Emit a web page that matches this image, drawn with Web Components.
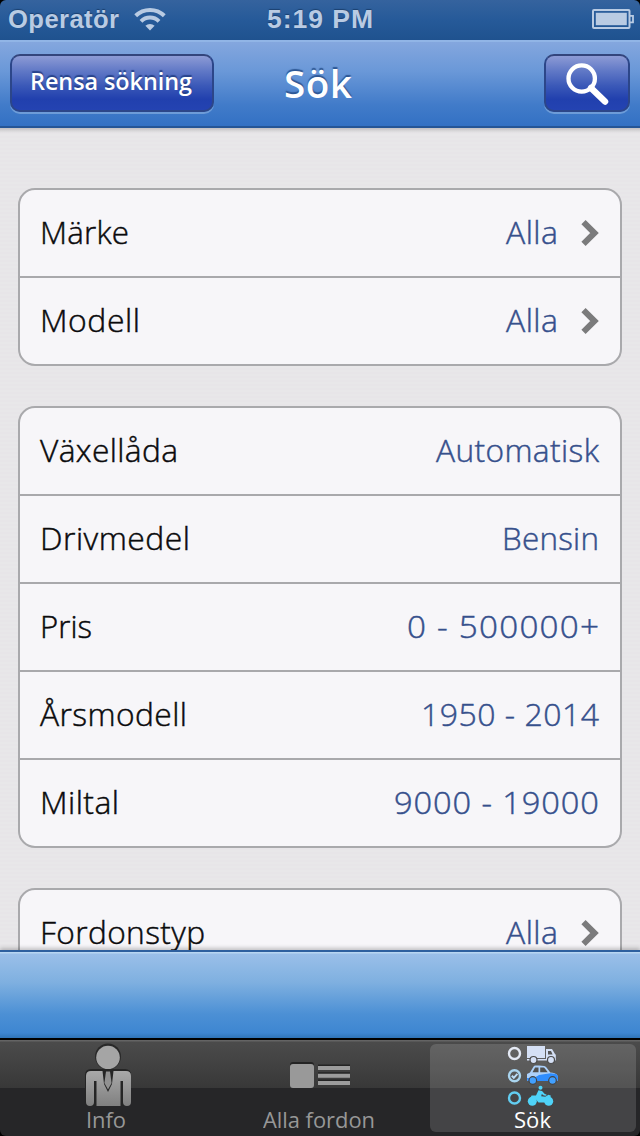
<!DOCTYPE html>
<html lang="sv">
<head>
<meta charset="utf-8">
<title>Sök</title>
<style>
html, body {
    margin: 0;
    height: 1136px;
    overflow: hidden;
    background: #000;
    font-family: "Open Sans", "Noto Sans", sans-serif;
}
</style>
</head>
<body>
<search-screen></search-screen>

<script>
function define(name, html, setup) {
    const template = document.createElement("template");
    template.innerHTML = html;

    window.customElements.define(name, class extends HTMLElement {
        connectedCallback() {
            if (this.shadowRoot) return;
            this.attachShadow({ mode: "open" });
            this.shadowRoot.append(template.content.cloneNode(true));
            if (setup) setup(this, this.shadowRoot);
        }
    });
}

function makeFitText(text, width) {
    const fit = document.createElement("fit-text");
    fit.setAttribute("text", text);
    fit.setAttribute("width", width);
    return fit;
}

// fills the given width: half by widening the glyphs, half by letter-spacing
define("fit-text", `
<style>
:host { display: block; white-space: nowrap; flex: none; }
span { display: inline-block; transform-origin: 0 50%; }
</style>
<span></span>
`, function(host, root) {
    const span = root.querySelector("span");
    const text = host.getAttribute("text");
    const width = Number(host.getAttribute("width"));
    span.textContent = text;
    const natural = span.getBoundingClientRect().width;
    const scale = (natural + width) / 2 / natural;
    span.style.letterSpacing = (width / scale - natural) / (text.length - 1) + "px";
    span.style.transform = "scaleX(" + scale + ")";
    host.style.width = width + "px";
});

define("status-bar", `
<style>
:host {
    display: grid;
    grid-template-columns: 1fr auto 1fr;
    align-items: center;
    box-sizing: border-box;
    height: 40px;
    padding: 0 6px 2px 8px;
    border-radius: 6px 6px 0 0;
    background: linear-gradient(#35639e, #265a99 50%, #1f528f);
    color: #b9cbe3;
    font: bold 25px/38px "Liberation Sans", sans-serif;
    text-shadow: 0 -1px 1px #1b406f;
}
div { display: flex; align-items: center; gap: 15px; }
svg { display: block; }
.time { margin-left: -2px; }
.battery { justify-self: end; }
</style>
<div>
    <fit-text text="Operatör" width="111"></fit-text>
    <svg width="32" height="24" viewBox="0 0 32 24" fill="none" stroke="#b9cbe3" stroke-width="4">
        <path d="M1.7 8.8a20.4 20.4 0 0 1 28.6 0"/>
        <path d="M7 14.3a12.8 12.8 0 0 1 18 0"/>
        <path d="M16 23.5l-4.6-4.7a6.6 6.6 0 0 1 9.2 0z" fill="#b9cbe3" stroke="none"/>
    </svg>
</div>
<fit-text class="time" text="5:19 PM" width="106"></fit-text>
<svg class="battery" width="42" height="20" viewBox="0 0 42 20">
    <rect x="1" y="1" width="36.5" height="18" rx="1" fill="none" stroke="#b9cbe3" stroke-width="2"/>
    <rect x="3.8" y="3.8" width="31" height="12.4" fill="#b9cbe3"/>
    <path d="M38 6.8h3v6.6h-3" fill="none" stroke="#b9cbe3" stroke-width="1.8"/>
</svg>
`);

define("nav-button", `
<style>
:host {
    display: flex;
    align-items: center;
    justify-content: center;
    box-sizing: border-box;
    height: 58px;
    border: 2px solid #2c4689;
    border-top-color: #33457c;
    border-radius: 10px;
    background: linear-gradient(#8d9bd5, #6078c6 28%, #3b59b8 55%, #2140ae 80%, #2443b2);
    box-shadow: 0 2px 0 #6d9cd8;
    color: #fff;
    font-size: 23.5px;
    font-weight: 600;
    line-height: 32px;
    text-shadow: 0 -2px 1px #27438b;
}
</style>
<slot></slot>
`);

define("nav-bar", `
<style>
:host {
    display: grid;
    grid-template-columns: 204px 1fr 86px;
    align-items: start;
    box-sizing: border-box;
    height: 88px;
    padding: 12px 10px 0;
    border-top: 2px solid #91b5e6;
    border-bottom: 2px solid #255596;
    background: linear-gradient(#84a7de, #6a98d8 35%, #417bc9 75%, #3371c4);
}
.title {
    padding-left: 70px;
    padding-top: 3px;
    color: #fff;
    font-size: 38px;
    font-weight: 600;
    line-height: 52px;
    text-shadow: 0 -2px 1px #2d5795;
}
nav-button.clear { padding: 0 2px 4px 0; }
svg { display: block; }
</style>
<nav-button class="clear"><fit-text text="Rensa sökning" width="162"></fit-text></nav-button>
<div class="title"><fit-text text="Sök" width="68"></fit-text></div>
<nav-button>
    <svg width="44" height="44" viewBox="0 0 44 44" fill="none" stroke="#fff">
        <circle cx="16.7" cy="17.5" r="13.2" stroke-width="4.3"/>
        <path d="M26 27l14 13.500" stroke-width="6.500" stroke-linecap="round"/>
    </svg>
</nav-button>
`);

define("form-group", `
<style>
:host {
    display: block;
    border: 2px solid #a9a9ac;
    border-radius: 17px;
    background: #f7f6f9;
}
::slotted(form-row:not(:first-child)) { border-top: 2px solid #a9a9ac; }
</style>
<slot></slot>
`);

// label and value are given as "text|width"
define("form-row", `
<style>
:host {
    display: flex;
    align-items: center;
    justify-content: space-between;
    height: 86px;
    padding: 0 21px 0 20px;
    font-size: 31px;
    font-weight: 300;
    line-height: 42px;
}
.label, .value { padding-bottom: 3px; -webkit-text-stroke: .45px; }
.label { color: #0a0a0c; }
.value { color: #36508c; }
.right { display: flex; align-items: center; gap: 23px; }
svg { display: none; }
:host([link]) svg { display: block; }
</style>
<div class="label"></div>
<div class="right">
    <div class="value"></div>
    <svg width="18" height="28" viewBox="0 0 18 28"><path d="M2.5 3.2l11 10.8-11 10.8" fill="none" stroke="#7b7b7c" stroke-width="6"/></svg>
</div>
`, function(host, root) {
    for (const part of ["label", "value"]) {
        root.querySelector("." + part).append(makeFitText(...host.getAttribute(part).split("|")));
    }
});

define("tool-bar", `
<style>
:host {
    display: block;
    box-sizing: border-box;
    height: 88px;
    border-top: 2px solid #2e609f;
    background: linear-gradient(#b8d6f2 0, #b8d6f2 1px, #9abfe9 2px, #7fb0e0 35%, #4c90d5 72%, #3e86d1 94%, #2f74b8);
    box-shadow: 0 -2px 4px rgba(0, 0, 0, .22);
}
</style>
`);

define("tab-item", `
<style>
:host {
    display: flex;
    flex-direction: column;
    align-items: center;
    box-sizing: border-box;
    height: 88px;
    margin: 4px 4px 0 3px;
    border-radius: 6px;
    color: #979797;
    font-size: 22px;
    line-height: 28px;
}
:host([selected]) {
    background: rgba(255, 255, 255, .14);
    color: #fff;
}
.icon { height: 61px; }
</style>
<div class="icon"><slot></slot></div>
<div class="label"></div>
`, function(host, root) {
    root.querySelector(".label").append(makeFitText(host.getAttribute("label"), host.getAttribute("width")));
});

define("tab-bar", `
<style>
:host {
    display: grid;
    grid-template-columns: 1fr 1fr 1fr;
    box-sizing: border-box;
    height: 98px;
    border-top: 2px solid #000;
    border-radius: 0 0 6px 6px;
    background: linear-gradient(#646464 0, #646464 1px, #4b4b4b 2px, #383838 48px, #262628 48px, #262628);
}
svg { display: block; overflow: visible; }
</style>
<tab-item label="Info" width="40">
    <svg width="46" height="62" viewBox="0 0 46 62">
        <defs><linearGradient id="suit" x1="0" y1="0" x2="0" y2="1"><stop offset="0" stop-color="#a9a9a9"/><stop offset="1" stop-color="#808080"/></linearGradient></defs>
        <g transform="translate(2 0)">
            <circle cx="23" cy="12.5" r="13" fill="#292929"/>
            <circle cx="23" cy="13.5" r="11.8" fill="#a5a5a5"/>
            <path d="M6 25h34q6 0 6 6v26q0 5-5 5h-36q-5 0-5-5v-26q0-6 6-6z" fill="#252525"/>
            <path d="M5 27h12.500l1.500 13 4 8 4-8 1.500-13h12.500q5 0 5 5v26q0 4-4 4t-4-4v-21h-2.500v25h-24v-25h-2.500v21q0 4-4 4t-4-4v-26q0-5 5-5z" fill="url(#suit)"/>
            <path d="M21 27.500h4l1.600 11.500-3.600 6.500-3.600-6.500z" fill="#919191"/>
        </g>
    </svg>
</tab-item>
<tab-item label="Alla fordon" width="112">
    <svg width="60" height="62" viewBox="-1 0 60 62">
        <rect x="0" y="18" width="24" height="25" rx="3" fill="#242424"/>
        <rect x="0" y="20" width="24" height="24" rx="3" fill="#999"/>
        <path d="M28 21.500h32M28 29.200h32M28 36.500h32" stroke="#242424" stroke-width="2"/>
        <path d="M28 24h32M28 31.700h32M28 39h32" stroke="#9c9c9c" stroke-width="4"/>
    </svg>
</tab-item>
<tab-item label="Sök" width="37" selected>
    <svg width="52" height="62" viewBox="0 0 52 62">
        <g fill="none" stroke-width="2.400">
            <circle cx="7.500" cy="9.500" r="5.500" stroke="#e4e9f4"/>
            <circle cx="7.500" cy="31.800" r="5.500" stroke="#a9d4ee"/>
            <path d="M4.800 31.700l2 2.100 3.600-4" stroke="#bcdcf5" stroke-width="2"/>
            <circle cx="7.500" cy="54" r="5.500" stroke="#62cdf1"/>
        </g>
        <g fill="#d5e0f5">
            <path d="M20 2h18v12h-18zM20 15h19v-10h6l3 5 .8.800v5.700h-28.800z"/>
            <path d="M41 7h3l1.600 3.600h-4.600z" fill="#555"/>
            <g stroke="#4b4b4b" stroke-width="1.200"><circle cx="26.500" cy="16" r="3.500"/><circle cx="44" cy="16" r="3.500"/></g>
        </g>
        <path d="M20 36v-6l3-1.500 3.600-6q.4-.8 2-.9 5-.4 8.500.3 1.400.3 2.200 1.300l4 5.400q5 .6 6.700 2.200 1 1 1 4.500l-.6 1.700h-30z" fill="#acd0fa"/>
        <path d="M20 34q8 .4 12-3 7-1 11.500-1.700 5.500 0 6.700 1.700 1 1 .8 4.300l-.6 1.700h-30z" fill="#2e8dff"/>
        <path d="M25.500 28.300l2.600-4.700h3.400v4.700zM33.200 23.600h3.300q.8 0 1.400.8l2.800 3.900h-7.500z" fill="#505050"/>
        <g fill="#42a0ff" stroke="#434343" stroke-width="1.200"><circle cx="25.800" cy="36.500" r="3.800"/><circle cx="45.500" cy="36.500" r="3.800"/></g>
        <g fill="#4fd3f8">
            <circle cx="33.500" cy="43.800" r="2"/>
            <path d="M31.500 46.300l3.500.7 2.800 3 1.700.6-.3 1.200-2.400-.2-2-1.500-.6 2.200 4 .5 3.300-2 2.500 1-1 2-2.500.5-2 4.200h-7l-3-3.500-5-1 1-2.400h4.500z"/>
            <circle cx="25.300" cy="57.300" r="4.500"/><circle cx="41.700" cy="57.300" r="4.500"/>
        </g>
    </svg>
</tab-item>
`);

define("search-screen", `
<style>
:host {
    display: flex;
    flex-direction: column;
    width: 640px;
    height: 1136px;
    overflow: hidden;
}
main {
    flex: 1;
    min-height: 0;
    overflow: hidden;
    display: flex;
    flex-direction: column;
    gap: 40px;
    padding: 60px 18px 0;
    background:
        linear-gradient(rgba(0, 0, 0, .16), transparent 5px),
        repeating-linear-gradient(#e7e5e8 0 2px, #e8e7e9 2px 4px);
}
form-group { flex: none; }
tool-bar { position: relative; }
</style>
<status-bar></status-bar>
<nav-bar></nav-bar>
<main>
    <form-group>
        <form-row label="Märke|89" value="Alla|52" link></form-row>
        <form-row label="Modell|100" value="Alla|52" link></form-row>
    </form-group>
    <form-group>
        <form-row label="Växellåda|138" value="Automatisk|163"></form-row>
        <form-row label="Drivmedel|150" value="Bensin|97"></form-row>
        <form-row label="Pris|52" value="0 - 500000+|192"></form-row>
        <form-row label="Årsmodell|147" value="1950 - 2014|178"></form-row>
        <form-row label="Miltal|79" value="9000 - 19000|205"></form-row>
    </form-group>
    <form-group>
        <form-row label="Fordonstyp|165" value="Alla|52" link></form-row>
    </form-group>
</main>
<tool-bar></tool-bar>
<tab-bar></tab-bar>
`);
</script>
</body>
</html>
